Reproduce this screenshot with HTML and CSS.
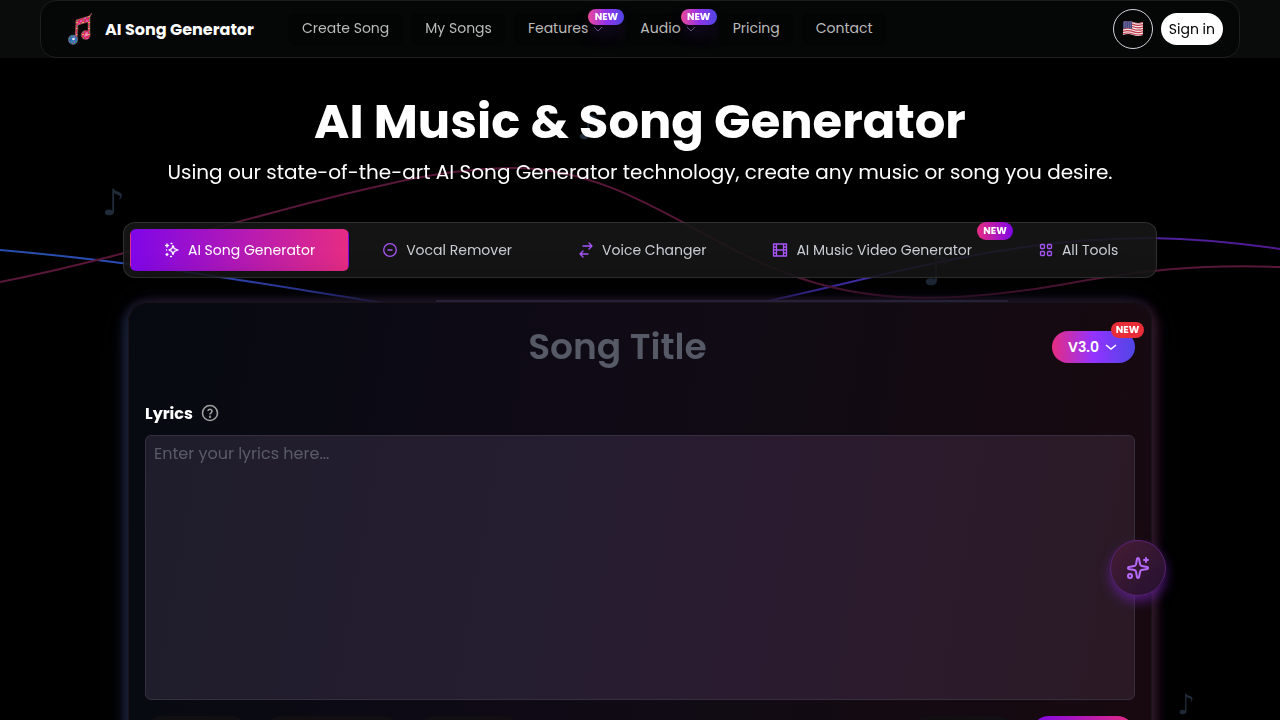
FILE: index.html
```
<!DOCTYPE html>
<html lang="en">
<head>
    <meta charset="UTF-8">
    <meta name="viewport" content="width=device-width, initial-scale=1.0">
    <title>AI Song Generator</title>
    <link rel="stylesheet" href="styles.css">
</head>
<body>

<!-- background waves and notes -->
<div class="backdrop" aria-hidden="true">
    <svg class="waves" viewBox="0 0 1280 720" preserveAspectRatio="none" fill="none" stroke-width="2">
        <defs>
            <linearGradient id="blue-wave" gradientUnits="userSpaceOnUse" x1="0" y1="0" x2="1280" y2="0">
                <stop offset="0" stop-color="#274fae"/>
                <stop offset="0.5" stop-color="#443bd0"/>
                <stop offset="1" stop-color="#501a90"/>
            </linearGradient>
        </defs>
        <path stroke="url(#blue-wave)" d="M0 250C140 262 250 282 384 303C520 324 640 330 768 301C900 272 1010 238 1150 238C1200 239 1240 243 1280 249"/>
        <path stroke="#581739" d="M0 282C140 254 255 213 384 185C430 174 470 168 515 168C620 168 700 242 786 273C870 306 960 302 1060 285C1140 270 1200 264 1280 267"/>
    </svg>
    <span class="note note-left">♪</span>
    <span class="note note-title">♪</span>
    <span class="note note-right">♪</span>
    <span class="note note-bottom">♪</span>
</div>

<header class="header">
    <div class="navbar">
        <a class="brand" href="/">
            <svg class="logo" viewBox="0 0 24 32">
                <defs>
                    <pattern id="warm" width="6" height="6" patternUnits="userSpaceOnUse">
                        <path fill="#d92c62" d="M0 0h6v6H0z"/>
                        <path fill="#e84fae" d="M0 1h2v2H0zM4 4h2v2H4z"/>
                        <path fill="#5aa05c" d="M3 0h1v2H3zM1 4h1v1H1z"/>
                        <path fill="#e6b25a" d="M2 3h2v1H2z"/>
                    </pattern>
                    <pattern id="cool" width="5" height="5" patternUnits="userSpaceOnUse">
                        <path fill="#2f6fb4" d="M0 0h5v5H0z"/>
                        <path fill="#3f9a74" d="M0 0h2v1H0zM3 3h2v1H3z"/>
                        <path fill="#9658b0" d="M1 3h1v2H1zM4 0h1v2H4z"/>
                    </pattern>
                </defs>
                <path d="M8 7 21 3 24 0 22 4V22H20V9L10 12 9 27H7Z" fill="url(#warm)" stroke="#a77b67" stroke-width=".4"/>
                <circle cx="5" cy="26.700" r="4.700" fill="url(#cool)" stroke="#8a8778" stroke-width=".4"/>
                <circle cx="17.700" cy="22" r="4.500" fill="url(#warm)" stroke="#b34c5e" stroke-width=".4"/>
                <circle cx="5.500" cy="26" r="1.300" fill="#d9e8ef"/>
                <path d="m18 19 1 2 2 1-3 1-1-1Z" fill="#f5a0a8"/>
            </svg>
            <span>AI Song Generator</span>
        </a>
        <nav class="nav">
            <a class="nav-link" href="#create">Create Song</a>
            <a class="nav-link" href="#songs">My Songs</a>
            <button class="nav-link" type="button">Features
                <svg class="chevron" viewBox="0 0 12 12"><path d="m2 5 4 4 4-4"/></svg>
                <span class="badge badge-nav">NEW</span>
            </button>
            <button class="nav-link" type="button">Audio
                <svg class="chevron" viewBox="0 0 12 12"><path d="m2 5 4 4 4-4"/></svg>
                <span class="badge badge-nav">NEW</span>
            </button>
            <a class="nav-link" href="#pricing">Pricing</a>
            <a class="nav-link" href="#contact">Contact</a>
        </nav>
        <div class="account">
            <button class="language" type="button" aria-label="Language">
                <svg class="flag" viewBox="0 0 22 16">
                    <clipPath id="flag-shape"><path d="M1 1q5-2 10 0t10 0v13q-5 2-10 0T1 14Z"/></clipPath>
                    <g clip-path="url(#flag-shape)">
                        <path fill="#f1e8e9" d="M0 0h22v16H0z"/>
                        <path stroke="#c33c4c" stroke-width="1.200" fill="none" d="M0 1q6-2 11 0t11 0M0 3.400q6-2 11 0t11 0M0 5.800q6-2 11 0t11 0M0 8.200q6-2 11 0t11 0M0 10.600q6-2 11 0t11 0M0 13q6-2 11 0t11 0M0 15.400q6-2 11 0t11 0"/>
                        <path fill="#46467f" d="M0 0h10v8q-5-2-10 0Z"/>
                        <path stroke="#8485ad" stroke-dasharray="1 1" d="M2 2h8M2 4h8M2 6h8"/>
                    </g>
                </svg>
            </button>
            <button class="sign-in" type="button">Sign in</button>
        </div>
    </div>
</header>

<main>
    <section class="hero">
        <h1>AI Music &amp; Song Generator</h1>
        <p>Using our state-of-the-art AI Song Generator technology, create any music or song you desire.</p>
    </section>

    <nav class="tools" aria-label="Tools">
        <a class="tool tool-active" href="#create">
            <svg class="icon" viewBox="0 0 16 16"><path d="M9 3.500 10.300 6.700 14 8l-3.700 1.300L9 12.500 7.700 9.300 5 8l2.700-1.300ZM3 2v3M1.500 3.500h3M3 11.500v2M2 12.500h2M7 1.500h1M6.500 14.500h1M2.500 8h.1"/></svg>
            AI Song Generator
        </a>
        <a class="tool" href="#vocal">
            <svg class="icon" viewBox="0 0 16 16"><circle cx="8" cy="8" r="6.300"/><path d="M6 8h4"/></svg>
            Vocal Remover
        </a>
        <a class="tool" href="#voice">
            <svg class="icon" viewBox="0 0 16 16"><path d="M5 4h9M11 1l3 3-3 3M10 12H2M5 9l-3 3 3 3"/></svg>
            Voice Changer
        </a>
        <a class="tool" href="#video">
            <svg class="icon" viewBox="0 0 16 16"><path d="M1.500 2h13v12h-13zM4.500 2v12M11.500 2v12M4.500 8h7M1.500 5h3M1.500 8h3M1.500 11h3M11.500 5h3M11.500 8h3M11.500 11h3"/></svg>
            AI Music Video Generator
            <span class="badge badge-tool">NEW</span>
        </a>
        <a class="tool" href="#all">
            <svg class="icon" viewBox="0 0 16 16"><rect x="2.500" y="2.500" width="4" height="4" rx="1"/><rect x="9.500" y="2.500" width="4" height="4" rx="1"/><rect x="2.500" y="9.500" width="4" height="4" rx="1"/><rect x="9.500" y="9.500" width="4" height="4" rx="1"/></svg>
            All Tools
        </a>
    </nav>

    <form class="card" id="create">
        <div class="title-row">
            <input class="song-title" type="text" placeholder="Song Title" aria-label="Song Title">
            <button class="version" type="button">V3.0
                <svg class="version-chevron" viewBox="0 0 12 12"><path d="m1 4 5 4 5-4"/></svg>
                <span class="badge badge-version">NEW</span>
            </button>
        </div>
        <div class="label-row">
            <label for="lyrics">Lyrics</label>
            <svg class="help" viewBox="0 0 18 18"><circle cx="9" cy="9" r="7.500"/><path d="M7 7a2 2 0 1 1 3 2c-1 .5-1 1-1 1.500"/><circle cx="9" cy="12.700" r=".4"/></svg>
        </div>
        <textarea class="lyrics" id="lyrics" placeholder="Enter your lyrics here..."></textarea>
        <div class="actions">
            <button class="chip" type="button" aria-label="Style"></button>
            <button class="chip chip-large" type="button" aria-label="Mood"></button>
            <button class="chip" type="button" aria-label="Voice"></button>
            <button class="chip chip-right" type="button" aria-label="Tempo"></button>
            <button class="generate" type="button" aria-label="Generate"></button>
        </div>
    </form>
</main>

<button class="assistant" type="button" aria-label="Assistant">
    <svg class="assistant-icon" viewBox="0 0 24 24"><path d="M11 2.800c.3-1.100 1.700-1.100 2 0l1.100 5.600a2 2 0 0 0 1.600 1.600l5.600 1.100c1.100.2 1.100 1.700 0 2l-5.600 1a2 2 0 0 0-1.600 1.600L13 21.300c-.3 1-1.700 1-2 0l-1-5.600a2 2 0 0 0-1.600-1.600l-5.700-1c-1-.3-1-1.800 0-2L8.400 10A2 2 0 0 0 10 8.400ZM20 2v4M18 4h4"/><circle cx="4" cy="20" r="2"/></svg>
</button>

</body>
</html>
```
FILE: styles.css
```
* {
    box-sizing: border-box;
}
body {
    margin: 0;
    min-height: 100vh;
    background: #000;
    color: #fff;
    font-family: Poppins, Inter, sans-serif;
    font-size: 14px;
    overflow: hidden;
}
a {
    color: inherit;
    text-decoration: none;
}
button, input, textarea {
    font: inherit;
    color: inherit;
}
button {
    border: 0;
    background: none;
    cursor: pointer;
}
svg {
    flex: none;
    fill: none;
}

/* background */
.backdrop {
    position: fixed;
    inset: 0;
    z-index: -1;
}
.waves {
    width: 100%;
    height: 100%;
}
.note {
    position: absolute;
    color: #212c3b;
    font-family: "DejaVu Sans", sans-serif;
    font-size: 36px;
    line-height: 36px;
}
.note-left {
    left: 102px;
    top: 185px;
}
.note-title {
    left: 577px;
    top: 109px;
}
.note-right {
    left: 922px;
    top: 252px;
    font-size: 44px;
}
.note-bottom {
    left: 1177px;
    top: 687px;
    font-size: 28px;
}

/* header */
.header {
    padding: 0 40px;
    background: #090c0b;
}
.navbar {
    display: flex;
    align-items: center;
    height: 58px;
    padding: 0 16px 0 24px;
    border: 1px solid #1c1e1e;
    border-radius: 16px;
    background: #050606;
}
.brand {
    display: flex;
    align-items: center;
    gap: 10px;
    width: 223px;
    font-size: 16px;
    font-weight: 700;
    white-space: nowrap;
}
.logo {
    width: 30px;
    height: 32px;
}
.nav {
    display: flex;
    gap: 8px;
    flex: 1;
}
.nav-link {
    position: relative;
    display: flex;
    align-items: center;
    gap: 4px;
    height: 32px;
    padding: 0 14px 2px;
    border-radius: 8px;
    background: #030404;
    color: #bababa;
    white-space: nowrap;
}
.chevron {
    width: 12px;
    height: 12px;
    stroke: #715887;
}
.badge {
    position: absolute;
    display: flex;
    align-items: center;
    justify-content: center;
    height: 16px;
    border-radius: 8px;
    color: #fff;
    font-size: 10px;
    font-weight: 700;
}
.badge-nav {
    top: -4px;
    right: -6px;
    width: 36px;
    background: linear-gradient(90deg, #ec4899, #9333ea, #4f46e5);
    box-shadow: 0 10px 15px #3b127044;
}
.account {
    display: flex;
    align-items: center;
    gap: 8px;
}
.language {
    display: flex;
    align-items: center;
    justify-content: center;
    width: 40px;
    height: 40px;
    padding: 0;
    border: 1px solid #d1d5db;
    border-radius: 50%;
}
.flag {
    width: 22px;
    height: 16px;
}
.sign-in {
    height: 32px;
    padding: 0 8px;
    border-radius: 16px;
    background: #fff;
    color: #000;
}

/* hero */
.hero {
    padding: 40px 16px 36px;
    text-align: center;
}
.hero h1 {
    margin: 0;
    font-size: 48px;
    line-height: 48px;
    font-weight: 700;
}
.hero p {
    margin: 12px 0 0;
    font-size: 20px;
    line-height: 28px;
}

/* tool tabs */
.tools {
    display: flex;
    justify-content: space-between;
    width: calc(100% - 246px);
    max-width: 1034px;
    height: 56px;
    margin: 0 auto;
    padding: 6px;
    border: 1px solid #ffffff1f;
    border-radius: 12px;
    background: #171717e0;
}
.tool {
    position: relative;
    display: flex;
    align-items: center;
    gap: 8px;
    padding: 0 33px;
    border-radius: 6px;
    color: #c9cdd3;
    white-space: nowrap;
}
.tool-active {
    border: solid transparent;
    border-width: 0 1px;
    background: linear-gradient(90deg, #7f06e8, #e62c83);
    color: #fff;
}
.icon {
    width: 16px;
    height: 16px;
    stroke: #a855f7;
    stroke-width: 1.3;
    stroke-linecap: round;
    stroke-linejoin: round;
}
.tool-active .icon {
    stroke: #fff;
}
.badge-tool {
    top: -7px;
    right: -8px;
    width: 36px;
    height: 18px;
    border-radius: 9px;
    background: linear-gradient(90deg, #e62c83, #7f06e8);
}

/* song form */
.card {
    position: relative;
    width: calc(100% - 256px);
    max-width: 1024px;
    min-height: 500px;
    margin: 24px auto 0;
    padding: 25px 16px;
    border: 1px solid #191419;
    border-radius: 20px;
    background: linear-gradient(100deg, #060a10, #0e0a15 35%, #110b14 60%, #18090f);
    box-shadow: -4px 4px 12px #15223a, 4px 4px 12px #3a1625, 0 -2px 12px #1e1428, 0 0 40px #0a0a10;
}
.card::before {
    content: "";
    position: absolute;
    top: -3px;
    left: 30%;
    right: 14%;
    height: 2px;
    background: #262038;
}
.title-row {
    display: flex;
    align-items: center;
    height: 38px;
}
.song-title {
    flex: 1;
    min-width: 0;
    height: 44px;
    padding: 0 0 2px 50px;
    border: 0;
    outline: 0;
    background: none;
    font-size: 36px;
    font-weight: 600;
    text-align: center;
}
.song-title::placeholder {
    color: #565966;
    opacity: 1;
}
.version {
    position: relative;
    display: flex;
    align-items: center;
    justify-content: center;
    gap: 6px;
    width: 83px;
    height: 32px;
    margin-left: 12px;
    padding: 0 2px 0 0;
    border-radius: 16px;
    background: linear-gradient(90deg, #e62c83, #9333ff 50%, #4f46e5);
    font-weight: 600;
}
.version-chevron {
    width: 12px;
    height: 12px;
    stroke: #fff;
    stroke-width: 1.5;
}
.badge-version {
    top: -9px;
    right: -9px;
    width: 33px;
    background: #e82c38;
}
.label-row {
    display: flex;
    align-items: center;
    gap: 8px;
    height: 24px;
    margin: 35px 0 10px;
    font-size: 16px;
    font-weight: 700;
}
.help {
    width: 18px;
    height: 18px;
    stroke: #a0a0a0;
    stroke-width: 1.6;
}
.lyrics {
    display: block;
    width: 100%;
    height: 265px;
    padding: 6px 8px;
    border: 1px solid #372f3f;
    border-radius: 6px;
    outline: 0;
    resize: none;
    background: linear-gradient(100deg, #1f1d2b, #251d30 40%, #2a1b30 60%, #2b1a25);
    font-size: 16px;
    line-height: 24px;
}
.lyrics::placeholder {
    color: #5a5b69;
    opacity: 1;
}
.actions {
    display: flex;
    gap: 16px;
    margin-top: 16px;
}
.chip, .generate {
    width: 104px;
    height: 36px;
    border-radius: 18px;
    background: #110f12;
}
.chip-large {
    width: 136px;
}
.chip-right {
    margin-left: auto;
}
.generate {
    background: linear-gradient(90deg, #7f06e8, #e62c83);
}

/* floating assistant */
.assistant {
    position: fixed;
    right: 114px;
    bottom: 124px;
    display: flex;
    align-items: center;
    justify-content: center;
    width: 56px;
    height: 56px;
    padding: 0;
    border: 1px solid #5b237c;
    border-radius: 50%;
    background: linear-gradient(135deg, #461d34, #241030);
    box-shadow: 0 6px 12px #6b21a8aa;
}
.assistant-icon {
    width: 24px;
    height: 24px;
    stroke: #b669fa;
    stroke-width: 2;
    stroke-linecap: round;
    stroke-linejoin: round;
}
```
